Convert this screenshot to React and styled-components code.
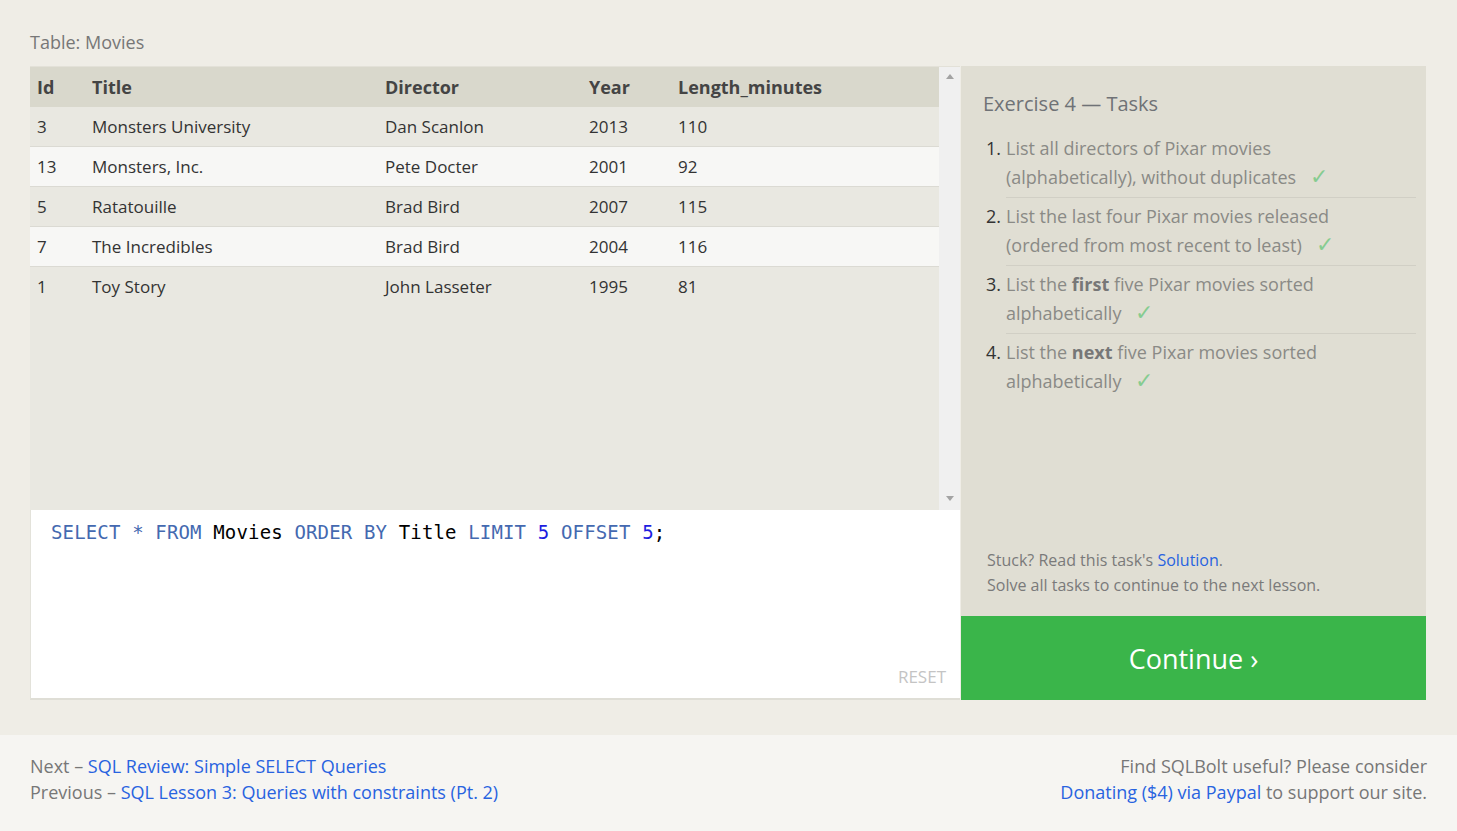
import React from 'react'
import styled, { createGlobalStyle } from 'styled-components'

const GlobalStyle = createGlobalStyle`
  html, body {
    margin: 0;
    padding: 0;
    background: #efede6;
    font-family: "Open Sans", "Noto Sans", sans-serif;
  }
`;

const movies = [
  { id: 3, title: 'Monsters University', director: 'Dan Scanlon', year: 2013, length: 110 },
  { id: 13, title: 'Monsters, Inc.', director: 'Pete Docter', year: 2001, length: 92 },
  { id: 5, title: 'Ratatouille', director: 'Brad Bird', year: 2007, length: 115 },
  { id: 7, title: 'The Incredibles', director: 'Brad Bird', year: 2004, length: 116 },
  { id: 1, title: 'Toy Story', director: 'John Lasseter', year: 1995, length: 81 },
];

const tasks = [
  { text: <>List all directors of Pixar movies (alphabetically), without duplicates</> },
  { text: <>List the last four Pixar movies released (ordered from most recent to least)</> },
  { text: <>List the <b>first</b> five Pixar movies sorted alphabetically</> },
  { text: <>List the <b>next</b> five Pixar movies sorted alphabetically</> },
];

export default function App() {
  return (
    <>
      <GlobalStyle />
      <Page>
        <Caption>Table: Movies</Caption>
        <Workspace>
          <LeftCol>
            <TableBox>
              <TableScroll>
                <HeadRow>
                  <Cell>Id</Cell>
                  <Cell>Title</Cell>
                  <Cell>Director</Cell>
                  <Cell>Year</Cell>
                  <Cell>Length_minutes</Cell>
                </HeadRow>
                {movies.map((m, i) => (
                  <Row key={m.id} alt={i % 2 === 1} last={i === movies.length - 1}>
                    <Cell>{m.id}</Cell>
                    <Cell>{m.title}</Cell>
                    <Cell>{m.director}</Cell>
                    <Cell>{m.year}</Cell>
                    <Cell>{m.length}</Cell>
                  </Row>
                ))}
              </TableScroll>
              <Scrollbar>
                <Arrow up />
                <Arrow />
              </Scrollbar>
            </TableBox>
            <Editor>
              <Code>
                <Kw>SELECT</Kw> <Kw>*</Kw> <Kw>FROM</Kw> Movies <Kw>ORDER</Kw> <Kw>BY</Kw> Title <Kw>LIMIT</Kw> <Num>5</Num> <Kw>OFFSET</Kw> <Num>5</Num>;
              </Code>
              <Reset>RESET</Reset>
            </Editor>
          </LeftCol>
          <RightCol>
            <TaskPanel>
              <TaskTitle>Exercise 4 — Tasks</TaskTitle>
              <TaskList>
                {tasks.map((t, i) => (
                  <Task key={i}>
                    <TaskNum>{i + 1}.</TaskNum>
                    <TaskBody last={i === tasks.length - 1}>
                      <TaskText>
                        {t.text}<Check>✓</Check>
                      </TaskText>
                    </TaskBody>
                  </Task>
                ))}
              </TaskList>
              <Hint>
                <p>Stuck? Read this task's <Link>Solution</Link>.</p>
                <p>Solve all tasks to continue to the next lesson.</p>
              </Hint>
            </TaskPanel>
            <ContinueButton>Continue ›</ContinueButton>
          </RightCol>
        </Workspace>
      </Page>
      <Footer>
        <div>
          <p>Next – <Link>SQL Review: Simple SELECT Queries</Link></p>
          <p>Previous – <Link>SQL Lesson 3: Queries with constraints (Pt. 2)</Link></p>
        </div>
        <FootRight>
          <p>Find SQLBolt useful? Please consider</p>
          <p><Link>Donating ($4) via Paypal</Link> to support our site.</p>
        </FootRight>
      </Footer>
    </>
  )
}

const Page = styled.div`
  padding: 28px 31px 35px 30px;
`;

const Caption = styled.div`
  font-size: 18px;
  color: #777;
  line-height: 28px;
  margin-bottom: 10px;
`;

const Workspace = styled.div`
  display: flex;
  height: 634px;
`;

const LeftCol = styled.div`
  width: 930px;
  display: flex;
  flex-direction: column;
`;

const TableBox = styled.div`
  height: 443px;
  display: flex;
  background: #e9e8e1;
  border-top: 1px solid #e3e1d8;
`;

const TableScroll = styled.div`
  flex: 1;
  display: flex;
  flex-direction: column;
`;

const Row = styled.div`
  display: grid;
  grid-template-columns: 55px 293px 204px 89px 1fr;
  height: 39px;
  align-items: center;
  padding-left: 7px;
  font-size: 17px;
  color: #333;
  background: ${({ alt }) => (alt ? '#f7f7f5' : '#e9e8e1')};
  border-bottom: 1px solid ${({ last }) => (last ? 'transparent' : '#dbdad3')};
`;

const HeadRow = styled(Row)`
  height: 40px;
  background: #d9d8cc;
  font-weight: 700;
  font-size: 18px;
  color: #444;
  border-bottom: none;
`;

const Cell = styled.div`
  white-space: nowrap;
`;

const Scrollbar = styled.div`
  width: 21px;
  background: #f0f0f0;
  display: flex;
  flex-direction: column;
  justify-content: space-between;
  align-items: center;
  padding: 7px 0 9px;
`;

const Arrow = styled.div`
  width: 0;
  height: 0;
  border-left: 4px solid transparent;
  border-right: 4px solid transparent;
  ${({ up }) => (up ? 'border-bottom: 5px solid #a3a3a3;' : 'border-top: 5px solid #a3a3a3;')}
`;

const Editor = styled.div`
  flex: 1;
  background: #fff;
  border-left: 1px solid #e3e2da;
  border-bottom: 2px solid #dfded6;
  display: flex;
  flex-direction: column;
  justify-content: space-between;
  padding: 11px 14px 10px 20px;
`;

const Code = styled.div`
  font-family: "DejaVu Sans Mono", "Liberation Mono", monospace;
  font-size: 19px;
  letter-spacing: 0.15px;
  color: #000;
  white-space: pre;
`;

const Kw = styled.span`
  color: #4469b0;
`;

const Num = styled.span`
  color: #1d1de0;
`;

const Reset = styled.div`
  align-self: flex-end;
  font-size: 17px;
  color: #c4c4c4;
`;

const RightCol = styled.div`
  flex: 1;
  margin-left: 1px;
  display: flex;
  flex-direction: column;
`;

const TaskPanel = styled.div`
  flex: 1;
  background: #e0ded3;
  padding: 24px 10px 18px 22px;
  display: flex;
  flex-direction: column;
`;

const TaskTitle = styled.div`
  font-size: 20px;
  color: #6f7276;
  margin-bottom: 17px;
`;

const TaskList = styled.ol`
  list-style: none;
  margin: 0;
  padding: 0;
  flex: 1;
`;

const Task = styled.li`
  display: flex;
  font-size: 18px;
  line-height: 29px;
  color: #8a8a86;
  margin-bottom: 4px;
`;

const TaskNum = styled.span`
  width: 18px;
  margin-right: 5px;
  flex: none;
  text-align: right;
  color: #333;
`;

const TaskBody = styled.div`
  flex: 1;
  padding-bottom: 5px;
  border-bottom: 1px solid ${({ last }) => (last ? 'transparent' : '#d1cfc5')};
`;

const TaskText = styled.div`
  max-width: 345px;
  b {
    color: #777;
  }
`;

const Check = styled.span`
  font-family: "DejaVu Sans", sans-serif;
  font-size: 22px;
  line-height: 20px;
  font-weight: 300;
  color: #86cc90;
  margin-left: 14px;
`;

const Hint = styled.div`
  padding-left: 4px;
  font-size: 16px;
  color: #7a7a7a;
  line-height: 25px;
  p {
    margin: 0;
  }
`;

const Link = styled.a`
  color: #2863e0;
  cursor: pointer;
`;

const ContinueButton = styled.div`
  height: 84px;
  background: #3ab54a;
  color: #fff;
  font-size: 27px;
  display: flex;
  align-items: center;
  justify-content: center;
`;

const Footer = styled.div`
  background: #f6f5f2;
  padding: 18px 30px 28px 30px;
  display: flex;
  justify-content: space-between;
  font-size: 18px;
  color: #777;
  line-height: 26px;
  p {
    margin: 0;
  }
`;

const FootRight = styled.div`
  text-align: right;
`;
